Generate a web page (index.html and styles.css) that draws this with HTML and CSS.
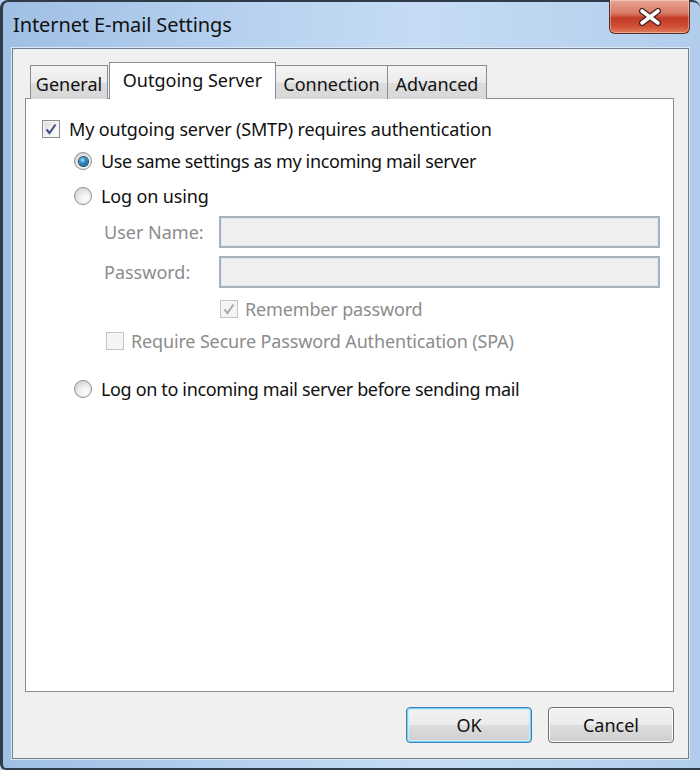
FILE: index.html
```html
<!DOCTYPE html>
<html>
<head>
<meta charset="utf-8">
<link rel="stylesheet" href="styles.css">
</head>
<body>
<div class="window">
  <div class="titlebar">
    <div class="title">Internet E-mail Settings</div>
    <div class="close">
      <svg width="26" height="18" viewBox="0 0 26 18">
        <path d="M5 3 L21 15 M21 3 L5 15" stroke="#4a1f1a" stroke-width="6" stroke-linecap="round"/>
        <path d="M5 3 L21 15 M21 3 L5 15" stroke="#ffffff" stroke-width="3.6" stroke-linecap="round"/>
      </svg>
    </div>
  </div>
  <div class="client">
    <div class="tabs">
      <div class="tab t-general">General</div>
      <div class="tab active">Outgoing Server</div>
      <div class="tab t-conn">Connection</div>
      <div class="tab t-adv">Advanced</div>
    </div>
    <div class="panel">
      <div class="row r1">
        <span class="check on"><svg width="14" height="14" viewBox="0 0 14 14"><path d="M2.5 7.5 L5.5 11 L11.5 2.5" fill="none" stroke="#3b4f8f" stroke-width="2"/></svg></span>
        <span class="label">My outgoing server (SMTP) requires authentication</span>
      </div>
      <div class="row r2 ind1">
        <span class="radio sel"></span>
        <span class="label">Use same settings as my incoming mail server</span>
      </div>
      <div class="row r3 ind1">
        <span class="radio"></span>
        <span class="label">Log on using</span>
      </div>
      <div class="row field">
        <span class="flabel">User Name:</span>
        <span class="input"></span>
      </div>
      <div class="row field f2">
        <span class="flabel">Password:</span>
        <span class="input"></span>
      </div>
      <div class="row r6">
        <span class="check dis"><svg width="14" height="14" viewBox="0 0 14 14"><path d="M2.5 7.5 L5.5 11 L11.5 2.5" fill="none" stroke="#a9a9a9" stroke-width="2"/></svg></span>
        <span class="label dlabel">Remember password</span>
      </div>
      <div class="row r7">
        <span class="check dis"></span>
        <span class="label dlabel">Require Secure Password Authentication (SPA)</span>
      </div>
      <div class="row r8 ind1">
        <span class="radio"></span>
        <span class="label">Log on to incoming mail server before sending mail</span>
      </div>
    </div>
    <div class="buttons">
      <div class="btn default">OK</div>
      <div class="btn">Cancel</div>
    </div>
  </div>
</div>
</body>
</html>
```

FILE: styles.css
```css
html, body {
  margin: 0;
  padding: 0;
}
body {
  width: 700px;
  height: 770px;
  overflow: hidden;
  font-family: "Noto Sans", "Open Sans", sans-serif;
  background: #b9d3ef;
}
.window {
  box-sizing: border-box;
  width: 700px;
  height: 770px;
  border: 2px solid #2f3b48;
  border-left-width: 3px;
  border-right: none;
  border-radius: 8px 8px 0 6px;
  background: linear-gradient(to right, #9fbfe4 0%, #b4cfee 30%, #c6dcf4 60%, #b2cdec 100%);
  display: flex;
  flex-direction: column;
}
.titlebar {
  height: 46px;
  display: flex;
  justify-content: space-between;
  align-items: flex-start;
  flex: none;
}
.title {
  font-size: 20px;
  color: #111;
  margin: 9px 0 0 10px;
  letter-spacing: -0.1px;
}
.close {
  box-sizing: border-box;
  width: 81px;
  height: 34px;
  margin: -2px 10px 0 0;
  border: 1px solid #5a2b24;
  border-top: none;
  border-radius: 0 0 6px 6px;
  background: linear-gradient(to bottom, #e9a595 0%, #d77a66 40%, #c23a25 55%, #cf4f36 80%, #e07d5f 100%);
  box-shadow: inset 0 0 0 1px rgba(255,255,255,0.35);
  display: flex;
  align-items: center;
  justify-content: center;
}
.client {
  box-sizing: border-box;
  margin: 0 11px 9px 9px;
  flex: 1;
  background: #f0f0f0;
  border: 1px solid #6f7f90;
  box-shadow: 0 0 0 1px #dce8f6;
  display: flex;
  flex-direction: column;
  padding: 14px 14px 15px 12px;
}
.tabs {
  display: flex;
  align-items: flex-end;
  padding-left: 5px;
  height: 36px;
  margin-bottom: -1px;
  position: relative;
  z-index: 1;
}
.tab {
  box-sizing: border-box;
  height: 34px;
  border: 1px solid #898c95;
  border-bottom: none;
  background: linear-gradient(to bottom, #f4f4f4 0%, #ebebeb 50%, #dddddd 51%, #d8d8d8 100%);
  font-size: 18px;
  color: #111;
  display: flex;
  align-items: center;
  justify-content: center;
  padding-top: 2px;
  margin-right: -1px;
}
.t-general { width: 78px; }
.tab.active {
  height: 37px;
  width: 167px;
  background: #ffffff;
  margin: 0 -1px 0 2px;
  padding-top: 0;
  padding-bottom: 3px;
  position: relative;
  z-index: 2;
}
.t-conn { width: 113px; margin-left: 0; }
.t-adv { width: 100px; }
.panel {
  box-sizing: border-box;
  flex: 1;
  background: #ffffff;
  border: 1px solid #898c95;
  padding: 18px 13px 0 16px;
  display: flex;
  flex-direction: column;
  gap: 8px;
}
.row {
  display: flex;
  align-items: center;
  height: 24px;
  font-size: 18px;
  color: #111;
}
.label { margin-left: 9px; letter-spacing: -0.15px; }
.r2 .label, .r8 .label { letter-spacing: -0.35px; }
.dlabel { color: #8c8c8c; margin-left: 7px; }
.ind1 { padding-left: 32px; }
.r3 { margin-top: 3px; }
.check {
  box-sizing: border-box;
  width: 18px;
  height: 18px;
  border: 1px solid #8f8f8f;
  background: linear-gradient(135deg, #dcdcdc 0%, #f4f4f4 60%, #ffffff 100%);
  box-shadow: inset 0 0 0 1px #f6f6f6;
  display: flex;
  align-items: center;
  justify-content: center;
  flex: none;
}
.check.dis {
  border-color: #c4c4c4;
  background: #f4f4f4;
}
.radio {
  box-sizing: border-box;
  width: 18px;
  height: 18px;
  border-radius: 50%;
  border: 1px solid #8e8f8f;
  background: radial-gradient(circle at 65% 70%, #ffffff 0%, #eeeeee 40%, #c9c9c9 100%);
  flex: none;
  display: flex;
  align-items: center;
  justify-content: center;
}
.radio.sel::after {
  content: "";
  width: 9px;
  height: 9px;
  border-radius: 50%;
  background: radial-gradient(circle at 40% 35%, #a7dcf6 0%, #2e8bc4 40%, #0d3f6e 100%);
  box-shadow: 0 0 0 1px #1b4a73;
}
.field {
  height: 32px;
  padding-left: 62px;
  padding-right: 0;
}
.f2 { margin-top: 0; }
.flabel {
  width: 115px;
  color: #8c8c8c;
  flex: none;
}
.input {
  box-sizing: border-box;
  flex: 1;
  height: 32px;
  background: #f0f0f0;
  border: 2px solid #a9b1bc;
  box-shadow: inset 0 0 0 1px #dfe7f2;
}
.r6 { padding-left: 178px; margin-top: 1px; }
.r7 { padding-left: 64px; }
.r8 { margin-top: 16px; }
.buttons {
  flex: none;
  display: flex;
  justify-content: flex-end;
  gap: 16px;
  margin-top: 15px;
  padding-right: 0;
}
.btn {
  box-sizing: border-box;
  width: 126px;
  height: 36px;
  border: 1px solid #707070;
  border-radius: 4px;
  background: linear-gradient(to bottom, #f2f2f2 0%, #ebebeb 50%, #dddddd 51%, #cfcfcf 100%);
  box-shadow: inset 0 0 0 1px #fbfbfb;
  font-size: 18px;
  color: #111;
  display: flex;
  align-items: center;
  justify-content: center;
}
.btn.default {
  border: 1px solid #3c7fb1;
  box-shadow: inset 0 0 0 1px #7fd0ef, inset 0 0 0 2px #c8ecf8;
}
```
